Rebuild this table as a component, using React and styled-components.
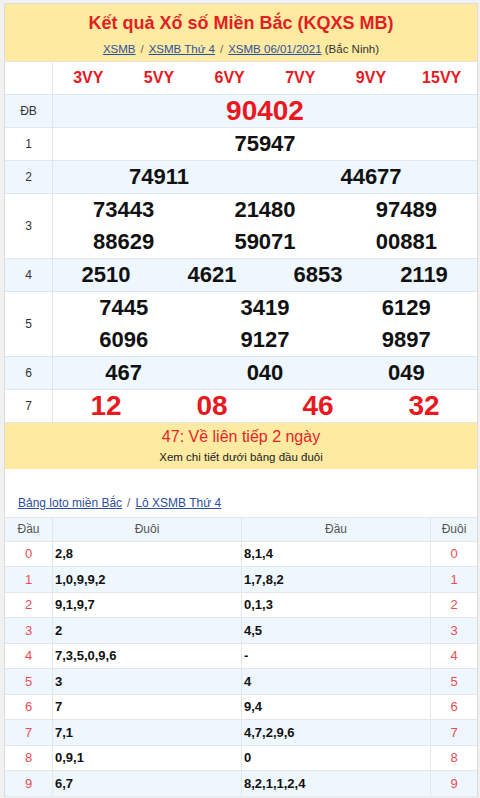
import React from "react";
import styled, { createGlobalStyle } from "styled-components";

const Global = createGlobalStyle`
  html, body { margin: 0; padding: 0; background: #f1f1f1; }
  body { font-family: "Liberation Sans", Arial, sans-serif; color: #111; }
`;

const Wrapper = styled.div`
  margin: 3px 2px 0 4px;
  border: 1px solid #dcdcdc;
  border-bottom: none;
  background: #fff;
`;

const Header = styled.div`
  background: #feeaa1;
  height: 57px;
  display: flex;
  flex-direction: column;
  align-items: center;
  border-bottom: 1px solid #e4e4e4;
`;

const Title = styled.h1`
  margin: 8px 0 0;
  font-size: 18px;
  line-height: 22px;
  font-weight: bold;
  color: #e31e24;
`;

const Crumbs = styled.div`
  margin-top: ${(p) => p.$mt || 0}px;
  font-size: ${(p) => p.$size}px;
  line-height: 16px;
  color: #333;
  padding-left: ${(p) => p.$pl || 0}px;
`;

const Link = styled.a`
  color: #2c4f9e;
  text-decoration: underline;
`;

const Sep = styled.span`
  margin: 0 5px;
  color: #666;
`;

const Row = styled.div`
  display: grid;
  grid-template-columns: 48px 1fr;
  background: ${(p) => (p.$alt ? "#eef6fe" : "#fff")};
  border-bottom: 1px solid #dfe6ee;
`;

const Label = styled.div`
  border-right: 1px solid #dfe6ee;
  display: flex;
  align-items: center;
  justify-content: center;
  font-size: 12px;
  color: #333;
`;

const Values = styled.div`
  display: grid;
  grid-template-columns: repeat(${(p) => p.$cols}, 1fr);
`;

const Num = styled.div`
  height: 32px;
  display: flex;
  align-items: center;
  justify-content: center;
  font-weight: bold;
  font-size: ${(p) => p.$size || 22}px;
  color: ${(p) => (p.$red ? "#e8181f" : "#111")};
`;

const Footer = styled.div`
  background: #feeaa1;
  height: 46px;
  display: flex;
  flex-direction: column;
  align-items: center;
  padding-top: 3px;
  box-sizing: border-box;
`;

const Streak = styled.div`
  color: #e8242b;
  font-size: 16px;
  line-height: 22px;
`;

const Note = styled.div`
  color: #222;
  font-size: 11.5px;
  line-height: 19px;
`;

const Section = styled.div`
  padding-top: 26px;
`;

const LotoTable = styled.div`
  margin-top: 6px;
  border-top: 1px solid #e3e7ec;
`;

const LotoRow = styled.div`
  display: grid;
  grid-template-columns: 48px 1fr 1fr 46px;
  height: ${(p) => (p.$head ? 23.5 : 25.5)}px;
  box-sizing: border-box;
  border-bottom: 1px solid #e3e7ec;
  background: ${(p) => (p.$alt ? "#eef6fe" : "#fff")};
`;

const LotoCell = styled.div`
  display: flex;
  align-items: center;
  justify-content: ${(p) => (p.$left ? "flex-start" : "center")};
  padding-left: ${(p) => (p.$left ? 2 : 0)}px;
  border-right: ${(p) => (p.$last ? "none" : "1px solid #e3e7ec")};
  font-size: ${(p) => (p.$head ? 12 : 13)}px;
  font-weight: ${(p) => (p.$bold ? "bold" : "normal")};
  color: ${(p) => (p.$red ? "#ee4b53" : p.$head ? "#555" : "#111")};
`;

const prizes = [
  { label: "ĐB", lines: [["90402"]], red: true, size: 28 },
  { label: "1", lines: [["75947"]] },
  { label: "2", lines: [["74911", "44677"]] },
  { label: "3", lines: [["73443", "21480", "97489"], ["88629", "59071", "00881"]] },
  { label: "4", lines: [["2510", "4621", "6853", "2119"]] },
  { label: "5", lines: [["7445", "3419", "6129"], ["6096", "9127", "9897"]] },
  { label: "6", lines: [["467", "040", "049"]] },
  { label: "7", lines: [["12", "08", "46", "32"]], red: true, size: 28 },
];

const loto = [
  ["2,8", "8,1,4"],
  ["1,0,9,9,2", "1,7,8,2"],
  ["9,1,9,7", "0,1,3"],
  ["2", "4,5"],
  ["7,3,5,0,9,6", "-"],
  ["3", "4"],
  ["7", "9,4"],
  ["7,1", "4,7,2,9,6"],
  ["0,9,1", "0"],
  ["6,7", "8,2,1,1,2,4"],
];

const heads = ["3VY", "5VY", "6VY", "7VY", "9VY", "15VY"];

export default function App() {
  return (
    <>
      <Global />
      <Wrapper>
        <Header>
          <Title>Kết quả Xổ số Miền Bắc (KQXS MB)</Title>
          <Crumbs $size={11.5} $mt={7}>
            <Link>XSMB</Link>
            <Sep>/</Sep>
            <Link>XSMB Thứ 4</Link>
            <Sep>/</Sep>
            <Link>XSMB 06/01/2021</Link> (Bắc Ninh)
          </Crumbs>
        </Header>
        <Row>
          <Label />
          <Values $cols={6}>
            {heads.map((h) => (
              <Num key={h} $red $size={16}>
                {h}
              </Num>
            ))}
          </Values>
        </Row>
        {prizes.map((p, i) => (
          <Row key={p.label} $alt={i % 2 === 0}>
            <Label>{p.label}</Label>
            <div>
              {p.lines.map((line, j) => (
                <Values key={j} $cols={line.length}>
                  {line.map((n, k) => (
                    <Num key={k} $red={p.red} $size={p.size}>
                      {n}
                    </Num>
                  ))}
                </Values>
              ))}
            </div>
          </Row>
        ))}
        <Footer>
          <Streak>47: Về liên tiếp 2 ngày</Streak>
          <Note>Xem chi tiết dưới bảng đầu đuôi</Note>
        </Footer>
        <Section>
          <Crumbs $size={12} $pl={13}>
            <Link>Bảng loto miền Bắc</Link>
            <Sep>/</Sep>
            <Link>Lô XSMB Thứ 4</Link>
          </Crumbs>
          <LotoTable>
            <LotoRow $head $alt>
              <LotoCell $head>Đầu</LotoCell>
              <LotoCell $head>Đuôi</LotoCell>
              <LotoCell $head>Đầu</LotoCell>
              <LotoCell $head $last>Đuôi</LotoCell>
            </LotoRow>
            {loto.map((r, i) => (
              <LotoRow key={i} $alt={i % 2 === 1}>
                <LotoCell $red>{i}</LotoCell>
                <LotoCell $left $bold>{r[0]}</LotoCell>
                <LotoCell $left $bold>{r[1]}</LotoCell>
                <LotoCell $red $last>{i}</LotoCell>
              </LotoRow>
            ))}
          </LotoTable>
        </Section>
      </Wrapper>
    </>
  );
}
